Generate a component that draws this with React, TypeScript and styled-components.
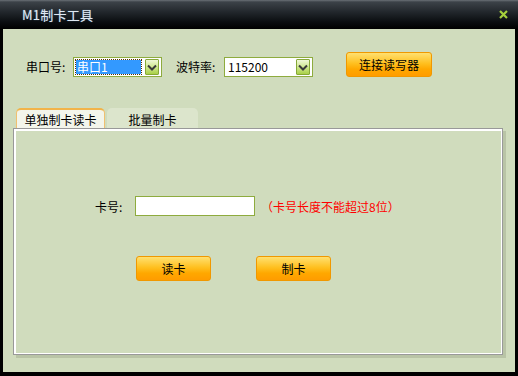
import React, { FC, useState } from 'react';
import styled, { createGlobalStyle } from 'styled-components';

const GlobalStyle = createGlobalStyle`
    html, body {
        margin: 0;
        padding: 0;
        background: #000000;
    }
    body {
        font-family: "Noto Sans CJK SC", "DejaVu Sans", sans-serif;
        font-size: 12px;
    }
`;

const Window = styled.div`
    display: flex;
    flex-direction: column;
    width: 518px;
    height: 376px;
    background: #000000;
    overflow: hidden;
`;

const TitleBar = styled.div`
    display: flex;
    flex-direction: row;
    justify-content: space-between;
    align-items: center;
    height: 29px;
    padding: 0 8px 0 22px;
    box-sizing: border-box;
    background: linear-gradient(#6a7076 0px, #3c4248 2px, #22272c 12px, #0a0d10 22px, #000000 29px);
`;

const Title = styled.span`
    font-size: 13px;
    font-weight: 400;
    color: #dfe8f2;
    letter-spacing: 0.02em;
    text-shadow: 0 0 1px #6a8cae;
`;

const Close = styled.button`
    display: flex;
    justify-content: center;
    align-items: center;
    width: 14px;
    height: 14px;
    padding: 0;
    border: none;
    background: transparent;
    cursor: pointer;
`;

const Body = styled.div`
    display: flex;
    flex-direction: column;
    height: 343px;
    margin: 0 3px;
    box-sizing: border-box;
    padding: 23px 0 0 10px;
    background: #d0dcbd;
`;

const Toolbar = styled.div`
    display: flex;
    flex-direction: row;
    align-items: flex-start;
    height: 25px;
    padding-left: 13px;
`;

const FieldLabel = styled.span<{ $w: number }>`
    width: ${(p) => p.$w}px;
    margin-top: 5px;
    line-height: 20px;
    color: #000000;
    white-space: nowrap;
`;

const SelectBox = styled.div<{ $gap: number }>`
    display: flex;
    flex-direction: row;
    align-items: center;
    justify-content: space-between;
    width: 89px;
    height: 20px;
    margin-top: 5px;
    margin-right: ${(p) => p.$gap}px;
    padding: 0 2px;
    box-sizing: border-box;
    background: #ffffff;
    border: 1px solid #8eab3e;
    box-shadow: inset 0 0 0 1px #ffffff;
`;

const SelectValue = styled.span<{ $focused?: boolean }>`
    display: flex;
    align-items: center;
    height: 14px;
    width: 65px;
    padding-left: 1px;
    box-sizing: border-box;
    color: ${(p) => (p.$focused ? '#ffffff' : '#000000')};
    background: ${(p) => (p.$focused ? '#3399ff' : 'transparent')};
    outline: ${(p) => (p.$focused ? '1px dotted #5a3000' : 'none')};
    line-height: 14px;
`;

const Arrow = styled.span`
    display: flex;
    justify-content: center;
    align-items: center;
    width: 14px;
    height: 16px;
    box-sizing: border-box;
    border: 1px solid #86a838;
    border-radius: 1px;
    background: linear-gradient(#f0f8d8 0%, #cfe890 50%, #a9d048 100%);
`;

const OrangeButton = styled.button<{ $w: number }>`
    width: ${(p) => p.$w}px;
    height: 25px;
    padding: 0;
    border: 1px solid #f09800;
    border-radius: 3px;
    background: linear-gradient(#ffe070 0%, #ffc020 45%, #ffa800 70%, #ff9c00 100%);
    font-family: inherit;
    font-size: 12px;
    color: #000000;
    cursor: pointer;
`;

const Tabs = styled.div`
    display: flex;
    flex-direction: row;
    gap: 2px;
    height: 20px;
    margin-top: 31px;
    padding-left: 3px;
`;

const Tab = styled.button<{ $active?: boolean; $w: number }>`
    width: ${(p) => p.$w}px;
    height: 20px;
    padding: 0;
    box-sizing: border-box;
    border: none;
    border-top: 2px solid ${(p) => (p.$active ? '#f2b44a' : 'transparent')};
    border-left: 1px solid ${(p) => (p.$active ? '#f0c070' : 'transparent')};
    border-right: 1px solid ${(p) => (p.$active ? '#f0c070' : 'transparent')};
    border-radius: 5px 5px 0 0;
    background: ${(p) => (p.$active ? '#f3f5eb' : '#dce5cc')};
    font-family: inherit;
    font-size: 12px;
    color: #000000;
    cursor: pointer;
`;

const Panel = styled.div`
    display: flex;
    flex-direction: column;
    width: 490px;
    height: 227px;
    box-sizing: border-box;
    padding: 67px 0 0 81px;
    border: 1px solid #999999;
    background: #d0dcbd;
    box-shadow: inset 2px 2px 0 #ffffff, inset -1px -1px 0 #ffffff, 3px 3px 0 #b9c4a6;
`;

const CardRow = styled.div`
    display: flex;
    flex-direction: row;
    align-items: center;
    height: 20px;
`;

const CardLabel = styled.span`
    width: 40px;
    color: #000000;
`;

const CardInput = styled.input`
    width: 120px;
    height: 20px;
    box-sizing: border-box;
    padding: 0 3px;
    border: 1px solid #8eab3e;
    background: #ffffff;
    font-family: inherit;
    font-size: 12px;
    outline: none;
`;

const Hint = styled.span`
    margin-left: 6px;
    color: #ff0000;
    white-space: nowrap;
`;

const ButtonRow = styled.div`
    display: flex;
    flex-direction: row;
    gap: 45px;
    margin-top: 40px;
    padding-left: 41px;
`;

const Chevron: FC = () => (
    <svg width="10" height="7" viewBox="0 0 10 7">
        <path d="M1 1.5 L5 5.5 L9 1.5" fill="none" stroke="#3a3a3a" strokeWidth="2" />
    </svg>
);

const App: FC = () => {
    const [tab, setTab] = useState(0);
    const [card, setCard] = useState('');

    return (
        <>
            <GlobalStyle />
            <Window>
                <TitleBar>
                    <Title>M1制卡工具</Title>
                    <Close>
                        <svg width="9" height="9" viewBox="0 0 9 9">
                            <path d="M1 1 L8 8 M8 1 L1 8" stroke="#a6d03c" strokeWidth="2.2" />
                        </svg>
                    </Close>
                </TitleBar>
                <Body>
                    <Toolbar>
                        <FieldLabel $w={47}>串口号:</FieldLabel>
                        <SelectBox $gap={14}>
                            <SelectValue $focused>串口1</SelectValue>
                            <Arrow>
                                <Chevron />
                            </Arrow>
                        </SelectBox>
                        <FieldLabel $w={48}>波特率:</FieldLabel>
                        <SelectBox $gap={33}>
                            <SelectValue>115200</SelectValue>
                            <Arrow>
                                <Chevron />
                            </Arrow>
                        </SelectBox>
                        <OrangeButton $w={86}>连接读写器</OrangeButton>
                    </Toolbar>
                    <Tabs>
                        <Tab $w={89} $active={tab === 0} onClick={() => setTab(0)}>
                            单独制卡读卡
                        </Tab>
                        <Tab $w={91} $active={tab === 1} onClick={() => setTab(1)}>
                            批量制卡
                        </Tab>
                    </Tabs>
                    <Panel>
                        <CardRow>
                            <CardLabel>卡号:</CardLabel>
                            <CardInput value={card} onChange={(e) => setCard(e.target.value)} />
                            <Hint>（卡号长度不能超过8位）</Hint>
                        </CardRow>
                        <ButtonRow>
                            <OrangeButton $w={75}>读卡</OrangeButton>
                            <OrangeButton $w={75}>制卡</OrangeButton>
                        </ButtonRow>
                    </Panel>
                </Body>
            </Window>
        </>
    );
};

export default App;
